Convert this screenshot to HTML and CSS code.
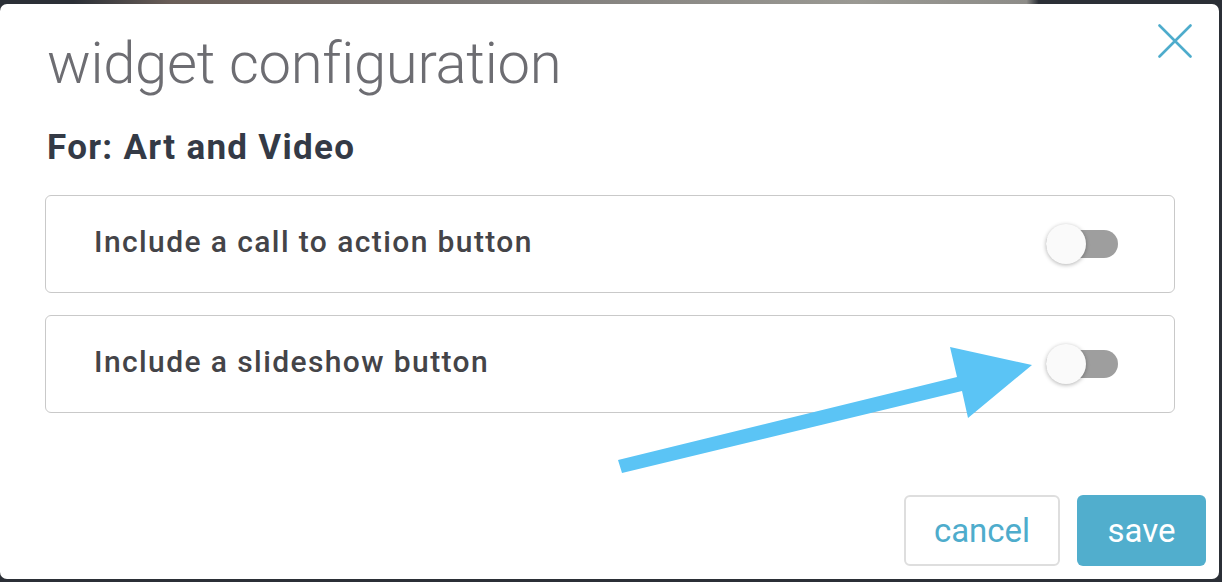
FILE: index.html
```html
<!DOCTYPE html>
<html lang="en">
<head>
  <meta charset="UTF-8" />
  <meta name="viewport" content="width=device-width, initial-scale=1.0"/>
  <title>Widget configuration</title>
  <link rel="stylesheet" href="styles.css">
</head>
<body>

  <div class="backdrop-strip"></div>

  <!-- Dialog -->
  <div class="dialog">
    <button class="close-btn" aria-label="Close">
      <svg width="34" height="34" viewBox="0 0 34 34">
        <path d="M1.5 1.5 L32.5 32.5 M32.5 1.5 L1.5 32.5" stroke="#4eaccc" stroke-width="2.6" fill="none" stroke-linecap="round"/>
      </svg>
    </button>

    <div class="dialog-body">
      <h1 class="dialog-title">widget configuration</h1>
      <h2 class="dialog-subtitle">For: Art and Video</h2>

      <div class="option">
        <span class="option-label">Include a call to action button</span>
        <span class="toggle"><span class="toggle-knob"></span></span>
      </div>

      <div class="option">
        <span class="option-label">Include a slideshow button</span>
        <span class="toggle"><span class="toggle-knob"></span></span>
      </div>
    </div>

    <div class="dialog-footer">
      <button class="btn btn-cancel">cancel</button>
      <button class="btn btn-save">save</button>
    </div>

    <!-- annotation arrow -->
    <svg class="annotation" width="1222" height="582" viewBox="0 0 1222 582">
      <path d="M618 460 L957 377 L950 347 L1032 365 L968 418 L962 391 L622 473 Z" fill="#5bc4f5"/>
    </svg>
  </div>

</body>
</html>
```

FILE: styles.css
```css
body {
  margin: 0;
  background-color: #2b2f36;
  font-family: Roboto, "Liberation Sans", sans-serif;
  overflow: hidden;
}

.backdrop-strip {
  height: 4px;
  background: linear-gradient(90deg, #2b2f36 0%, #2b2f36 6%, #6a5e58 14%, #7d7a78 40%, #9a9993 70%, #8d8c88 84%, #2b2f36 85%, #2b2f36 100%);
}

.dialog {
  position: relative;
  width: 1219px;
  height: 575px;
  background-color: #fff;
  border-radius: 7px;
  display: flex;
  flex-direction: column;
}

.dialog-body {
  padding: 0 44px 0 45px;
}

.dialog-title {
  margin: 0;
  padding: 24px 0 0 2px;
  font-size: 58px;
  line-height: 70px;
  font-weight: 300;
  letter-spacing: -0.3px;
  color: #6d6d72;
}

.dialog-subtitle {
  margin: 0;
  padding: 30px 0 0 2px;
  font-size: 35px;
  line-height: 40px;
  font-weight: 700;
  letter-spacing: 1.3px;
  color: #343a46;
}

.option {
  box-sizing: border-box;
  display: flex;
  justify-content: space-between;
  align-items: center;
  height: 98px;
  margin-top: 22px;
  padding: 0 56px 0 48px;
  border: 1px solid #c9c9c9;
  border-radius: 6px;
}

.dialog-subtitle + .option {
  margin-top: 27px;
}

.option-label {
  margin-bottom: 6px;
  font-size: 30px;
  font-weight: 500;
  letter-spacing: 1.4px;
  color: #444448;
}

.toggle {
  position: relative;
  width: 72px;
  height: 28px;
  border-radius: 14px;
  background-color: #9e9e9e;
}

.toggle-knob {
  position: absolute;
  left: 0;
  top: -6px;
  width: 40px;
  height: 40px;
  border-radius: 50%;
  background-color: #fafafa;
  box-shadow: 0 1px 4px rgba(0,0,0,0.3);
}

.dialog-footer {
  margin-top: auto;
  display: flex;
  justify-content: flex-end;
  gap: 17px;
  padding: 0 13px 13px 0;
}

.btn {
  height: 71px;
  border-radius: 6px;
  font-family: Roboto, "Liberation Sans", sans-serif;
  font-size: 33px;
  cursor: pointer;
}

.btn-cancel {
  width: 156px;
  background-color: #fff;
  border: 2px solid #dedede;
  color: #4eaccc;
}

.btn-save {
  width: 129px;
  background-color: #51aecd;
  border: none;
  color: #fff;
}

.close-btn {
  position: absolute;
  top: 20px;
  right: 27px;
  padding: 0;
  border: none;
  background: none;
  line-height: 0;
  cursor: pointer;
}

.annotation {
  position: absolute;
  left: 0;
  top: -4px;
  pointer-events: none;
}
```
